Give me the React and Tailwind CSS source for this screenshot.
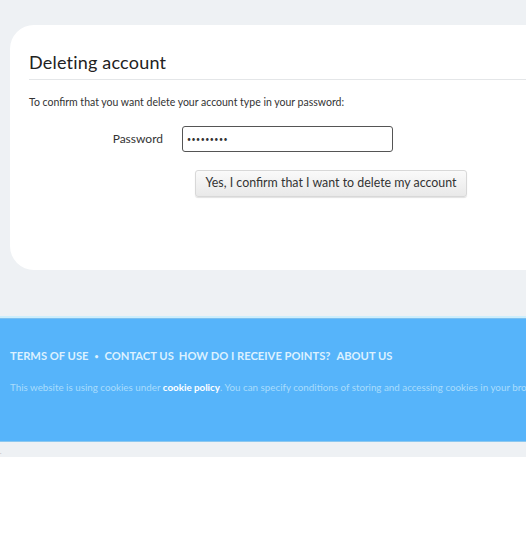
export default function App() {
    return (
        <div className="min-h-[557px] bg-white font-['Lato',sans-serif] overflow-hidden">
            <div className="bg-[#eef1f4] pt-[25px] pb-[46px] pl-[10px]">
                <div className="bg-white rounded-l-[24px] h-[245px] pt-[25px] pl-[19px]">
                    <h1 className="text-[18px] leading-[24px] text-[#222] tracking-[0.2px]">Deleting account</h1>
                    <div className="border-b border-[#e4e6e8] mt-[5px]" />
                    <p className="text-[10.5px] text-[#333] mt-[15px] leading-[14px]">
                        To confirm that you want delete your account type in your password:
                    </p>
                    <div className="flex items-center mt-[17px]">
                        <label className="w-[134px] text-right text-[12px] text-[#333]">Password</label>
                        <input
                            type="password"
                            defaultValue="123456789"
                            className="ml-[19px] w-[211px] h-[26px] rounded-[3px] border border-[#555] px-[4px] text-[7px] tracking-[0.5px] text-[#333] outline-none"
                        />
                    </div>
                    <button className="ml-[166px] mt-[18px] w-[272px] h-[27px] rounded-[3px] border border-[#d8d8d8] bg-gradient-to-b from-[#fafafa] to-[#e9e9e9] text-[12.4px] text-[#333] shadow-[0_1px_1px_rgba(0,0,0,0.12)]">
                        Yes, I confirm that I want to delete my account
                    </button>
                </div>
            </div>
            <div className="h-[2px] bg-[#cdeefc]" />
            <div className="h-[1px] bg-[#7cc0ee]" />
            <div className="bg-[#56b4fa] h-[122px] pl-[10px] pt-[29px] overflow-hidden">
                <nav className="flex items-center text-[11.2px] font-bold text-[#dcf1ff] whitespace-nowrap">
                    <span>TERMS OF USE</span>
                    <span className="mx-[6px] text-[7px]">•</span>
                    <span>CONTACT US</span>
                    <span className="ml-[5px]">HOW DO I RECEIVE POINTS?</span>
                    <span className="ml-[6px]">ABOUT US</span>
                </nav>
                <p className="mt-[15px] text-[9.8px] text-[#a9dcfc] whitespace-nowrap">
                    This website is using cookies under <b className="text-white">cookie policy</b>. You can specify conditions of storing and accessing cookies in your browser.
                </p>
            </div>
            <div className="h-[1px] bg-[#8cc8ef]" />
            <div className="h-[15px] bg-[#eef1f4] text-[6px] text-[#999] leading-[20px]">.</div>
        </div>
    )
}
